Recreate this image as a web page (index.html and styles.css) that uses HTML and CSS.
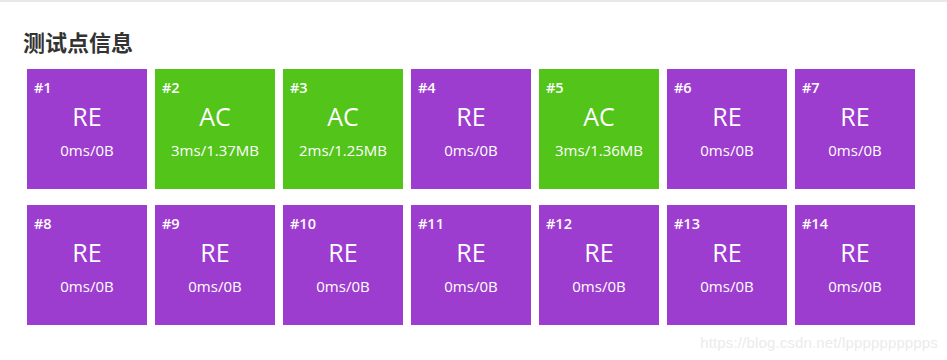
FILE: index.html
```html
<!DOCTYPE html>
<html lang="zh-CN">
<head>
  <meta charset="UTF-8">
  <meta name="viewport" content="width=device-width, initial-scale=1.0">
  <title>测试点信息</title>
  <link rel="stylesheet" href="styles.css">
</head>
<body>
  <div class="page">
    <h2 class="title">测试点信息</h2>
    <div class="cases">
      <div class="case re">
        <div class="case-id">#1</div>
        <div class="case-status">RE</div>
        <div class="case-info">0ms/0B</div>
      </div>
      <div class="case ac">
        <div class="case-id">#2</div>
        <div class="case-status">AC</div>
        <div class="case-info">3ms/1.37MB</div>
      </div>
      <div class="case ac">
        <div class="case-id">#3</div>
        <div class="case-status">AC</div>
        <div class="case-info">2ms/1.25MB</div>
      </div>
      <div class="case re">
        <div class="case-id">#4</div>
        <div class="case-status">RE</div>
        <div class="case-info">0ms/0B</div>
      </div>
      <div class="case ac">
        <div class="case-id">#5</div>
        <div class="case-status">AC</div>
        <div class="case-info">3ms/1.36MB</div>
      </div>
      <div class="case re">
        <div class="case-id">#6</div>
        <div class="case-status">RE</div>
        <div class="case-info">0ms/0B</div>
      </div>
      <div class="case re">
        <div class="case-id">#7</div>
        <div class="case-status">RE</div>
        <div class="case-info">0ms/0B</div>
      </div>
      <div class="case re">
        <div class="case-id">#8</div>
        <div class="case-status">RE</div>
        <div class="case-info">0ms/0B</div>
      </div>
      <div class="case re">
        <div class="case-id">#9</div>
        <div class="case-status">RE</div>
        <div class="case-info">0ms/0B</div>
      </div>
      <div class="case re">
        <div class="case-id">#10</div>
        <div class="case-status">RE</div>
        <div class="case-info">0ms/0B</div>
      </div>
      <div class="case re">
        <div class="case-id">#11</div>
        <div class="case-status">RE</div>
        <div class="case-info">0ms/0B</div>
      </div>
      <div class="case re">
        <div class="case-id">#12</div>
        <div class="case-status">RE</div>
        <div class="case-info">0ms/0B</div>
      </div>
      <div class="case re">
        <div class="case-id">#13</div>
        <div class="case-status">RE</div>
        <div class="case-info">0ms/0B</div>
      </div>
      <div class="case re">
        <div class="case-id">#14</div>
        <div class="case-status">RE</div>
        <div class="case-info">0ms/0B</div>
      </div>
    </div>
  </div>

  <div class="watermark">https://blog.csdn.net/lpppppppppps</div>
</body>
</html>
```

FILE: styles.css
```css
body {
  font-family: "Open Sans", "Noto Sans CJK SC", sans-serif;
  background-color: #fff;
  margin: 0;
  padding: 0;
  height: 360px;
  position: relative;
  overflow: hidden;
}

.page {
  border-top: 2px solid #e8e8e8;
  padding: 0 0 0 23px;
}

.title {
  font-family: "Noto Sans CJK SC", sans-serif;
  font-size: 22px;
  font-weight: bold;
  line-height: 30px;
  color: #333;
  margin: 24px 0 13px 0;
}

.cases {
  display: flex;
  flex-wrap: wrap;
  gap: 16px 8px;
  width: 888px;
  margin-left: 4px;
}

.case {
  width: 120px;
  height: 120px;
  box-sizing: border-box;
  padding: 9px 7px 0 7px;
  color: white;
}

.case.re {
  background-color: #9d3dcf;
}

.case.ac {
  background-color: #52c41a;
}

.case-id {
  font-size: 14.5px;
  font-weight: 600;
  line-height: 20px;
}

.case-status {
  font-size: 25px;
  line-height: 30px;
  margin-top: 3px;
  text-align: center;
}

.case-info {
  font-size: 15px;
  line-height: 20px;
  margin-top: 9px;
  text-align: center;
}

.watermark {
  position: absolute;
  right: 9px;
  bottom: 8px;
  font-family: "Liberation Sans", Arial, sans-serif;
  font-size: 15px;
  letter-spacing: 0.15px;
  line-height: 18px;
  color: #ebebeb;
}
```
